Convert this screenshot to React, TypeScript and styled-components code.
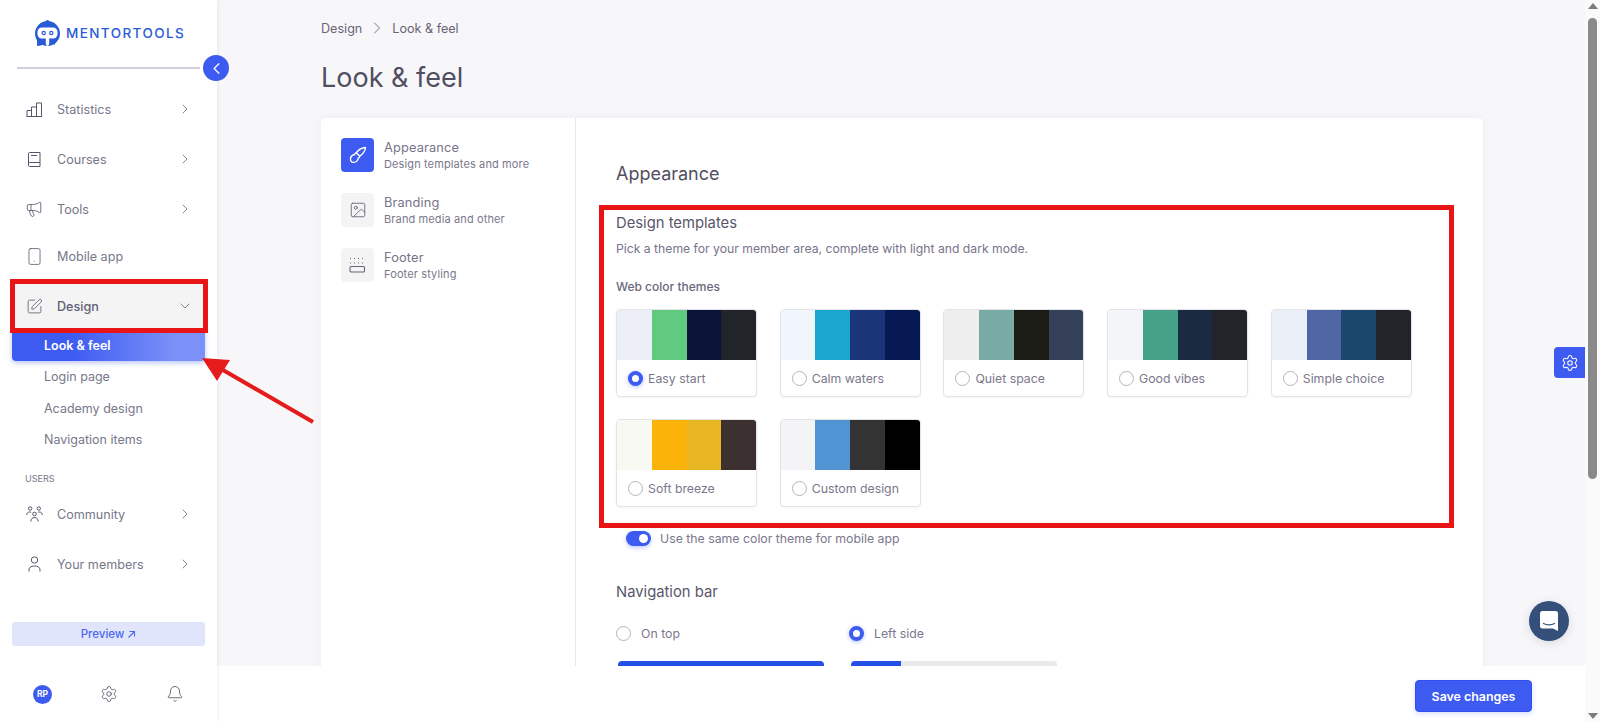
import React from "react";
import styled, { createGlobalStyle } from "styled-components";
import { Bell, ChevronDown, ChevronLeft, ChevronRight, Image, Megaphone, Settings, Smartphone, SquarePen } from "lucide-react";

const GlobalStyle = createGlobalStyle`
  html, body {
    margin: 0;
    padding: 0;
    height: 722px;
    overflow: hidden;
    background: #fff;
    font-family: "Inter", "Liberation Sans", sans-serif;
  }
  * { box-sizing: border-box; }
`;

const Page = styled.div`
  position: relative;
  display: flex;
  width: 1600px;
  height: 722px;
  overflow: hidden;
`;

/* sidebar */
const Sidebar = styled.aside`
  position: relative;
  z-index: 3;
  flex: 0 0 217px;
  display: flex;
  flex-direction: column;
  background: #fff;
  box-shadow: 1px 0 3px rgba(60, 60, 90, 0.08);
`;

const LogoRow = styled.div`
  height: 67px;
  padding: 20px 0 0 34px;
  display: flex;
  align-items: flex-start;
  gap: 5px;
`;

const LogoText = styled.span`
  margin-top: 4px;
  font-size: 13.5px;
  line-height: 18px;
  letter-spacing: 1.4px;
  font-weight: 500;
  color: #2a5bd7;
`;

const DividerRow = styled.div`
  position: relative;
  height: 2px;
  margin: 0 17px;
  width: 183px;
  background: #cfd0d8;
`;

const CollapseButton = styled.div`
  position: absolute;
  right: -29px;
  top: -12px;
  width: 26px;
  height: 26px;
  border-radius: 50%;
  background: #3d5af1;
  color: #fff;
  display: flex;
  align-items: center;
  justify-content: center;
`;

const Nav = styled.nav`
  padding: 18px 14px 0 15px;
  display: flex;
  flex-direction: column;
`;

const NavItem = styled.div<{ $open?: boolean; $tight?: boolean }>`
  position: relative;
  z-index: ${(p) => (p.$open ? 2 : 0)};
  height: 44px;
  margin-top: ${(p) => (p.$tight ? 3 : 6)}px;
  display: flex;
  align-items: center;
  padding: 0 10px 0 11px;
  color: #66667a;
  background: ${(p) => (p.$open ? "#f4f4f5" : "transparent")};
  outline: ${(p) => (p.$open ? "5px solid #e81416" : "none")};
  &:first-child { margin-top: 0; }
`;

const NavIcon = styled.span`
  width: 16px;
  height: 18px;
  display: flex;
  align-items: center;
  justify-content: center;
  color: #55556a;
  svg { flex-shrink: 0; }
`;

const NavLabel = styled.span<{ $open?: boolean }>`
  flex: 1;
  margin-left: 15px;
  font-size: 12.6px;
  font-weight: ${(p) => (p.$open ? 500 : 400)};
  color: ${(p) => (p.$open ? "#5f5f74" : "#77778a")};
`;

const SubList = styled.div`
  margin: 1px -2px 0 -3px;
  display: flex;
  flex-direction: column;
`;

const SubItem = styled.div<{ $active?: boolean }>`
  height: ${(p) => (p.$active ? 32 : 31.5)}px;
  padding-left: 32px;
  display: flex;
  align-items: center;
  font-size: 12.5px;
  font-weight: ${(p) => (p.$active ? 600 : 400)};
  color: ${(p) => (p.$active ? "#fff" : "#77778a")};
  border-radius: 0 0 4px 4px;
  background: ${(p) => (p.$active ? "linear-gradient(90deg, #3d5af1 30%, #7b91f9 85%)" : "none")};
  box-shadow: ${(p) => (p.$active ? "0 2px 5px rgba(61, 90, 241, 0.35)" : "none")};
`;

const SectionLabel = styled.div`
  margin: 17px 0 1.5px 10px;
  font-size: 9px;
  line-height: 12px;
  color: #77778a;
`;

const PreviewButton = styled.div`
  margin: 36px 12px 0;
  height: 24px;
  border-radius: 3px;
  background: #e0e5fb;
  color: #4d68f0;
  font-size: 11.5px;
  font-weight: 500;
  display: flex;
  align-items: center;
  justify-content: center;
  gap: 3px;
`;

const UserRow = styled.div`
  margin-top: 38.5px;
  padding: 0 33px;
  display: flex;
  align-items: center;
  justify-content: space-between;
  color: #4f4f64;
`;

const Avatar = styled.div`
  width: 19px;
  height: 19px;
  border-radius: 50%;
  background: #3d5af1;
  color: #fff;
  font-size: 8.5px;
  font-weight: 700;
  display: flex;
  align-items: center;
  justify-content: center;
`;

/* main */
const Main = styled.main`
  flex: 1;
  min-width: 0;
  display: flex;
  flex-direction: column;
`;

const Content = styled.div`
  height: 666px;
  padding: 18px 102px 0 104px;
  background: #f7f7fa;
  overflow: hidden;
`;

const Breadcrumbs = styled.div`
  height: 20px;
  display: flex;
  align-items: center;
  gap: 5px;
  font-size: 12.6px;
  color: #6a6478;
`;

const PageTitle = styled.h1`
  margin: 22px 0 0;
  font-size: 27px;
  line-height: 36px;
  font-weight: 400;
  color: #524e62;
`;

const Card = styled.div`
  margin-top: 22px;
  height: 640px;
  display: flex;
  background: #fff;
  border-radius: 5px 5px 0 0;
  box-shadow: 0 0 8px rgba(70, 70, 100, 0.06);
`;

const TabColumn = styled.div`
  flex: 0 0 255px;
  padding: 20px 0 0 20px;
  border-right: 1px solid #e6e6ea;
  display: flex;
  flex-direction: column;
  gap: 21px;
`;

const Tab = styled.div`
  display: flex;
  align-items: center;
  gap: 10px;
`;

const TabIcon = styled.div<{ $active?: boolean }>`
  width: 33px;
  height: 34px;
  border-radius: 4px;
  display: flex;
  align-items: center;
  justify-content: center;
  background: ${(p) => (p.$active ? "#3d5af1" : "#f4f4f5")};
  color: ${(p) => (p.$active ? "#fff" : "#66667a")};
`;

const TabTitle = styled.div`
  font-size: 12.8px;
  line-height: 17px;
  letter-spacing: 0.15px;
  color: #77738a;
`;

const TabSub = styled.div`
  font-size: 11px;
  line-height: 16px;
  letter-spacing: 0.12px;
  color: #7b778c;
`;

const Pane = styled.div`
  flex: 1;
  padding: 44px 0 0 40px;
`;

const PaneTitle = styled.h2`
  margin: 0;
  font-size: 18px;
  line-height: 24px;
  font-weight: 400;
  color: #524e62;
`;

const TemplatesFrame = styled.section`
  margin: 19px 0 0 -17px;
  width: 855px;
  height: 323px;
  padding: 3px 0 0 12px;
  border: 5px solid #e81416;
`;

const SectionTitle = styled.h3`
  margin: 0;
  font-size: 14.8px;
  line-height: 20px;
  font-weight: 400;
  color: #5a566c;
`;

const Description = styled.p`
  margin: 7px 0 0;
  font-size: 12.2px;
  line-height: 18px;
  color: #77738a;
`;

const SubHeading = styled.div`
  margin-top: 20px;
  font-size: 12px;
  line-height: 18px;
  font-weight: 500;
  color: #6a667c;
`;

const ThemeGrid = styled.div`
  margin-top: 13px;
  display: grid;
  grid-template-columns: repeat(5, 141px);
  column-gap: 22.7px;
  row-gap: 22px;
`;

const ThemeCard = styled.div`
  height: 88px;
  border: 1px solid #e4e4e8;
  border-radius: 4px;
  overflow: hidden;
  background: #fff;
  box-shadow: 0 1px 2px rgba(60, 60, 90, 0.05);
`;

const Swatches = styled.div`
  height: 50px;
  display: flex;
`;

const Swatch = styled.div<{ $color: string }>`
  flex: 1;
  background: ${(p) => p.$color};
`;

const ThemeFoot = styled.div`
  height: 37px;
  padding-left: 11px;
  display: flex;
  align-items: center;
  gap: 5px;
`;

const Radio = styled.span<{ $on?: boolean }>`
  flex: 0 0 15px;
  width: 15px;
  height: 15px;
  border-radius: 50%;
  background: #fff;
  border: ${(p) => (p.$on ? "4px solid #3d5af1" : "1px solid #b4b4bc")};
  box-shadow: ${(p) => (p.$on ? "0 1px 4px rgba(61, 90, 241, 0.4)" : "none")};
`;

const OptionLabel = styled.span`
  font-size: 12.3px;
  color: #7b778c;
`;

const ToggleRow = styled.div`
  margin: 3px 0 0 10px;
  height: 15px;
  display: flex;
  align-items: center;
  gap: 9px;
`;

const Toggle = styled.span`
  width: 25px;
  height: 15px;
  padding: 3px 3px 3px 13px;
  border-radius: 8px;
  background: #3d5af1;
  box-shadow: 0 2px 4px rgba(61, 90, 241, 0.3);
  &::after {
    content: "";
    display: block;
    width: 9px;
    height: 9px;
    border-radius: 50%;
    background: #fff;
  }
`;

const NavBarTitle = styled(SectionTitle)`
  margin-top: 36px;
`;

const NavChoices = styled.div`
  margin-top: 24px;
  display: grid;
  grid-template-columns: 233px 233px;
`;

const NavChoice = styled.div`
  display: flex;
  align-items: center;
  gap: 10px;
`;

const NavPreview = styled.div<{ $side?: boolean }>`
  width: 206px;
  height: 60px;
  margin: 20px 0 0 2px;
  border-radius: 4px 4px 0 0;
  background: ${(p) =>
    p.$side ? "linear-gradient(90deg, #2450e8 50px, #eaeaec 50px)" : "#2450e8"};
`;

const Footer = styled.footer`
  position: relative;
  z-index: 2;
  height: 56px;
  padding: 14px 53px 0 0;
  background: #fff;
  display: flex;
  justify-content: flex-end;
`;

const SaveButton = styled.button`
  width: 117px;
  height: 32px;
  border: 1px solid #2f4ff0;
  border-radius: 4px;
  background: #3d5af1;
  color: #fff;
  font: 600 12.4px "Inter", "Liberation Sans", sans-serif;
  box-shadow: 0 2px 5px rgba(61, 90, 241, 0.2);
`;

/* browser scrollbar */
const ScrollTrack = styled.div`
  flex: 0 0 15px;
  background: #fafafa;
  display: flex;
  flex-direction: column;
  align-items: center;
  justify-content: space-between;
  padding: 3px 0;
`;

const ScrollThumb = styled.div`
  width: 9px;
  height: 461px;
  margin-top: 9px;
  border-radius: 5px;
  background: #8a8a8a;
`;

const ScrollArrow = styled.span<{ $down?: boolean }>`
  width: 0;
  height: 0;
  border-left: 5px solid transparent;
  border-right: 5px solid transparent;
  ${(p) => (p.$down ? "border-top: 6px solid #7c7c7c;" : "border-bottom: 6px solid #7c7c7c;")}
`;

const ScrollColumn = styled.div`
  flex: 1;
  display: flex;
  flex-direction: column;
  align-items: center;
`;

/* things that float over the page */
const SettingsTab = styled.div`
  position: absolute;
  z-index: 4;
  left: 1554px;
  top: 347px;
  width: 31px;
  height: 31px;
  border-radius: 4px 0 0 4px;
  background: #3d5af1;
  color: #fff;
  display: flex;
  align-items: center;
  justify-content: center;
`;

const ChatBubble = styled.div`
  position: absolute;
  z-index: 4;
  left: 1529px;
  top: 601px;
  width: 40px;
  height: 40px;
  border-radius: 50%;
  background: #34507a;
  box-shadow: 0 2px 10px rgba(40, 50, 80, 0.15);
  display: flex;
  align-items: center;
  justify-content: center;
`;

const ArrowMark = styled.svg`
  position: absolute;
  z-index: 5;
  left: 195px;
  top: 350px;
`;

const StatsIcon = () => (
  <svg width="17" height="15" viewBox="0 0 17 15" fill="none" stroke="currentColor" strokeWidth="1">
    <path d="M1 14.5V8.5h4.5v6M5.5 14.5V5h5v9.5M10.5 14.5V1h5v13.5M.5 14.5h15.5" />
  </svg>
);
const BookIcon = () => (
  <svg width="14" height="15" viewBox="0 0 14 15" fill="none" stroke="currentColor" strokeWidth="1">
    <path d="M1.5 11V1.5a1 1 0 0 1 1-1h10.5v10H2.5a1.5 1.5 0 0 0-1 .5zM1.5 11v2a1.5 1.5 0 0 0 1 1.5H13v-4M4 3.5h6" />
  </svg>
);
const CommunityIcon = () => (
  <svg width="17" height="16" viewBox="0 0 17 16" fill="none" stroke="currentColor" strokeWidth="1">
    <circle cx="4.2" cy="2.5" r="1.7" />
    <circle cx="12.8" cy="2.5" r="1.7" />
    <circle cx="8.5" cy="8" r="1.8" />
    <path d="M.7 9c0-2 1.2-3 3-3 .6 0 1.1.1 1.5.4M16.3 9c0-2-1.200-3-3-3-.6 0-1.100.1-1.500.4M4.800 15.500c0-2.500 1.500-4 3.700-4s3.700 1.500 3.700 4" />
  </svg>
);
const MemberIcon = () => (
  <svg width="13" height="16" viewBox="0 0 13 16" fill="none" stroke="currentColor" strokeWidth="1">
    <circle cx="6.500" cy="4" r="3.200" />
    <path d="M1 15.500v-1.500c0-2.500 2-4 5.500-4s5.500 1.500 5.500 4v1.500" />
  </svg>
);
const BrushIcon = () => (
  <svg width="18" height="18" viewBox="0 0 18 18" fill="none" stroke="currentColor" strokeWidth="1.400" strokeLinejoin="round">
    <path d="M16.500 1.500c-3.500.3-7 2.300-9.300 5.200l3.600 3.600c2.900-2.300 5.400-5.300 5.700-8.800zM7.200 6.700c-.9.3-1.500 1-1.500 1.800C3 9 1.300 10.800 1.500 13.500c.1 1.800 1.500 3 3.200 2.900 2.500-.2 4.300-2 4.600-4.400 .8-.1 1.300-.9 1.500-1.700" />
  </svg>
);
const FooterIcon = () => (
  <svg width="17" height="16" viewBox="0 0 17 16" fill="none" stroke="currentColor">
    <path d="M1 1.500h1M5 1.500h1M9 1.500h1M13 1.500h1M1 6h1M5 6h1M9 6h1M13 6h1" strokeWidth="1" />
    <rect x="1" y="9.500" width="14.500" height="5.500" rx="1" strokeWidth="1.100" />
  </svg>
);
const OutArrow = () => (
  <svg width="9" height="9" viewBox="0 0 9 9" fill="none" stroke="currentColor" strokeWidth="1.100">
    <path d="M1.500 7.500L7.500 1.500M2.500 1.500h5v5" />
  </svg>
);
const LogoMark = () => (
  <svg width="27" height="27" viewBox="0 0 27 27">
    <circle cx="13.500" cy="1.800" r="1.800" fill="#2a5bd7" />
    <circle cx="13.500" cy="13.500" r="12.500" fill="#2a5bd7" />
    <path fill="#2a5bd7" d="M3 19v7c3.500 0 6-1 8-3zM17 22l3.500 3 2-5z" />
    <rect x="3.500" y="7.500" width="20" height="11" rx="4.500" fill="#fff" />
    <path fill="#fff" d="M11.800 18h3.400v5.500c0 1-1 2.500-1.700 2.500s-1.700-1.500-1.700-2.500z" />
    <circle cx="9.700" cy="13" r="1.600" fill="none" stroke="#2a5bd7" strokeWidth="1.200" />
    <circle cx="17.300" cy="13" r="1.600" fill="none" stroke="#2a5bd7" strokeWidth="1.200" />
  </svg>
);

const themes = [
  { name: "Easy start", colors: ["#eceff8", "#60cb80", "#0a1439", "#212529"], on: true },
  { name: "Calm waters", colors: ["#f1f6fd", "#19a7ce", "#1a3678", "#071952"] },
  { name: "Quiet space", colors: ["#eeeeee", "#7aaaa5", "#1a1c15", "#344159"] },
  { name: "Good vibes", colors: ["#f4f5f8", "#45a188", "#1a2a40", "#212529"] },
  { name: "Simple choice", colors: ["#ebeff8", "#4f66a5", "#1a476b", "#212529"] },
  { name: "Soft breeze", colors: ["#f9f9f3", "#fbb209", "#e8b623", "#3c3030"] },
  { name: "Custom design", colors: ["#f4f4f6", "#5094d4", "#333333", "#000000"] },
];

const App: React.FC = () => {
  return (
    <Page>
      <GlobalStyle />
      <Sidebar>
        <LogoRow>
          <LogoMark />
          <LogoText>MENTORTOOLS</LogoText>
        </LogoRow>
        <DividerRow>
          <CollapseButton>
            <ChevronLeft size={19} strokeWidth={1.5} />
          </CollapseButton>
        </DividerRow>
        <Nav>
          <NavItem>
            <NavIcon><StatsIcon /></NavIcon>
            <NavLabel>Statistics</NavLabel>
            <ChevronRight size={16} strokeWidth={1.2} />
          </NavItem>
          <NavItem>
            <NavIcon><BookIcon /></NavIcon>
            <NavLabel>Courses</NavLabel>
            <ChevronRight size={16} strokeWidth={1.2} />
          </NavItem>
          <NavItem>
            <NavIcon><Megaphone size={18} strokeWidth={1.1} /></NavIcon>
            <NavLabel>Tools</NavLabel>
            <ChevronRight size={16} strokeWidth={1.2} />
          </NavItem>
          <NavItem $tight>
            <NavIcon><Smartphone size={19} strokeWidth={1} /></NavIcon>
            <NavLabel>Mobile app</NavLabel>
          </NavItem>
          <NavItem $open>
            <NavIcon><SquarePen size={17} strokeWidth={1.1} /></NavIcon>
            <NavLabel $open>Design</NavLabel>
            <ChevronDown size={16} strokeWidth={1.2} />
          </NavItem>
          <SubList>
            <SubItem $active>Look &amp; feel</SubItem>
            <SubItem>Login page</SubItem>
            <SubItem>Academy design</SubItem>
            <SubItem>Navigation items</SubItem>
          </SubList>
          <SectionLabel>USERS</SectionLabel>
          <NavItem>
            <NavIcon><CommunityIcon /></NavIcon>
            <NavLabel>Community</NavLabel>
            <ChevronRight size={16} strokeWidth={1.2} />
          </NavItem>
          <NavItem>
            <NavIcon><MemberIcon /></NavIcon>
            <NavLabel>Your members</NavLabel>
            <ChevronRight size={16} strokeWidth={1.2} />
          </NavItem>
        </Nav>
        <PreviewButton>
          Preview <OutArrow />
        </PreviewButton>
        <UserRow>
          <Avatar>RP</Avatar>
          <Settings size={18} strokeWidth={1.1} />
          <Bell size={18} strokeWidth={1.1} />
        </UserRow>
      </Sidebar>

      <Main>
        <Content>
          <Breadcrumbs>
            <span>Design</span>
            <ChevronRight size={20} strokeWidth={1.1} />
            <span>Look &amp; feel</span>
          </Breadcrumbs>
          <PageTitle>Look &amp; feel</PageTitle>
          <Card>
            <TabColumn>
              <Tab>
                <TabIcon $active><BrushIcon /></TabIcon>
                <div>
                  <TabTitle>Appearance</TabTitle>
                  <TabSub>Design templates and more</TabSub>
                </div>
              </Tab>
              <Tab>
                <TabIcon><Image size={18} strokeWidth={1.2} /></TabIcon>
                <div>
                  <TabTitle>Branding</TabTitle>
                  <TabSub>Brand media and other</TabSub>
                </div>
              </Tab>
              <Tab>
                <TabIcon><FooterIcon /></TabIcon>
                <div>
                  <TabTitle>Footer</TabTitle>
                  <TabSub>Footer styling</TabSub>
                </div>
              </Tab>
            </TabColumn>
            <Pane>
              <PaneTitle>Appearance</PaneTitle>
              <TemplatesFrame>
                <SectionTitle>Design templates</SectionTitle>
                <Description>Pick a theme for your member area, complete with light and dark mode.</Description>
                <SubHeading>Web color themes</SubHeading>
                <ThemeGrid>
                  {themes.map((theme) => (
                    <ThemeCard key={theme.name}>
                      <Swatches>
                        {theme.colors.map((color) => (
                          <Swatch key={color} $color={color} />
                        ))}
                      </Swatches>
                      <ThemeFoot>
                        <Radio $on={theme.on} />
                        <OptionLabel>{theme.name}</OptionLabel>
                      </ThemeFoot>
                    </ThemeCard>
                  ))}
                </ThemeGrid>
              </TemplatesFrame>
              <ToggleRow>
                <Toggle />
                <OptionLabel>Use the same color theme for mobile app</OptionLabel>
              </ToggleRow>
              <NavBarTitle>Navigation bar</NavBarTitle>
              <NavChoices>
                <NavChoice>
                  <Radio />
                  <OptionLabel>On top</OptionLabel>
                </NavChoice>
                <NavChoice>
                  <Radio $on />
                  <OptionLabel>Left side</OptionLabel>
                </NavChoice>
                <NavPreview />
                <NavPreview $side />
              </NavChoices>
            </Pane>
          </Card>
        </Content>
        <Footer>
          <SaveButton>Save changes</SaveButton>
        </Footer>
      </Main>

      <ScrollTrack>
        <ScrollColumn>
          <ScrollArrow />
          <ScrollThumb />
        </ScrollColumn>
        <ScrollArrow $down />
      </ScrollTrack>

      <SettingsTab>
        <Settings size={18} strokeWidth={1.4} />
      </SettingsTab>
      <ChatBubble>
        <svg width="18" height="20" viewBox="0 0 18 20">
          <path fill="#fff" d="M2.500 0h13A2.500 2.500 0 0 1 18 2.500V20l-5-2.500H2.500A2.500 2.500 0 0 1 0 15V2.500A2.500 2.500 0 0 1 2.500 0z" />
          <path fill="none" stroke="#34507a" strokeWidth="1.200" strokeLinecap="round" d="M3.500 12.500c3 1.800 8 1.800 11 0" />
        </svg>
      </ChatBubble>
      <ArrowMark width="125" height="80" viewBox="0 0 125 80">
        <path d="M118 72L28 20" stroke="#e51c1c" strokeWidth="4" fill="none" />
        <path d="M7 8L35 10L22 31z" fill="#e51c1c" />
      </ArrowMark>
    </Page>
  );
};

export default App;
